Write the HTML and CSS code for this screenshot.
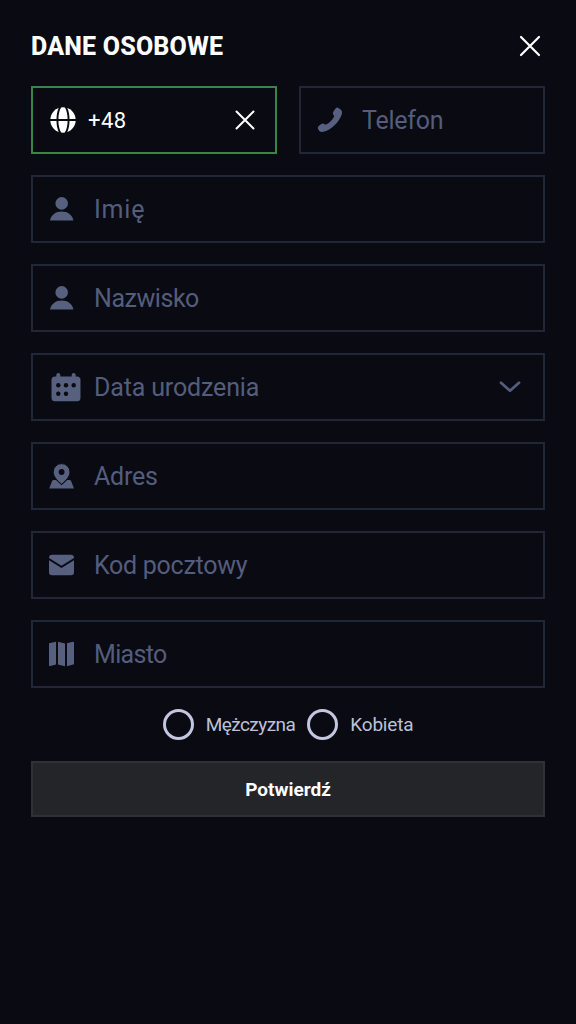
FILE: index.html
```html
<!DOCTYPE html>
<html lang="pl">
<head>
<meta charset="utf-8">
<title>Dane osobowe</title>
<link rel="stylesheet" href="styles.css">
</head>
<body>
<main class="form">
  <header class="header">
    <h1 class="title">DANE OSOBOWE</h1>
    <svg class="close" viewBox="0 0 22 22"><path d="M2 2L20 20M20 2L2 20"/></svg>
  </header>
  <div class="fields">
    <div class="phone-row">
      <div class="field field-active">
        <svg class="icon globe" viewBox="0 0 26 26"><circle cx="13" cy="13" r="12.7"/><path class="cut" d="M0 13H26M10.800-1C6.300 6 6.300 20 10.800 27M15.200-1C19.700 6 19.700 20 15.200 27"/></svg>
        <span class="value">+48</span>
        <svg class="clear" viewBox="0 0 20 20"><path d="M1.500 1.500L18.500 18.500M18.500 1.500L1.500 18.500"/></svg>
      </div>
      <div class="field">
        <svg class="icon" viewBox="0 0 26 26"><path d="M18.700 1.200Q20 .2 21.500.9L24 2.700Q25.300 4 25 6.500C23 14.500 14 23.300 6.200 24.800Q3.500 25.200 2.300 24L.9 21.700Q.4 20 1.700 18.900L4.300 17Q5.500 16.200 6.800 16.800L8.700 17.700C12.300 16 15.700 12.700 17.300 9.200L16.200 7.400Q15.500 6 16.300 4.700Z"/></svg>
        <span class="label telefon">Telefon</span>
      </div>
    </div>
    <div class="field">
      <svg class="icon" viewBox="0 0 26 26"><circle cx="12.700" cy="7.400" r="6.300"/><path d="M1 24.500C2 19 6.700 15.600 12.700 15.600S23.400 19 24.400 24.500Z"/></svg>
      <span class="label imie">Imię</span>
    </div>
    <div class="field">
      <svg class="icon" viewBox="0 0 26 26"><circle cx="12.700" cy="7.400" r="6.300"/><path d="M1 24.500C2 19 6.700 15.600 12.700 15.600S23.400 19 24.400 24.500Z"/></svg>
      <span class="label nazwisko">Nazwisko</span>
    </div>
    <div class="field">
      <svg class="icon calendar" viewBox="0 0 30 30"><rect x="5.300" y="1" width="4" height="9" rx="2"/><rect x="20.700" y="1" width="4" height="9" rx="2"/><rect x=".5" y="4.600" width="29" height="24.700" rx="3.500"/><g class="cutout"><circle cx="7.300" cy="13.200" r="2.200"/><circle cx="15" cy="13.200" r="2.200"/><circle cx="22.700" cy="13.200" r="2.200"/><circle cx="7.300" cy="21.800" r="2.200"/><circle cx="15" cy="21.800" r="2.200"/></g></svg>
      <span class="label data">Data urodzenia</span>
      <svg class="chevron" viewBox="0 0 24 14"><path d="M3 2.800L12 10.800L21 2.800"/></svg>
    </div>
    <div class="field">
      <svg class="icon" viewBox="0 0 26 26"><path d="M.2 25.400L3 18.200Q3.500 17 4.700 17H7L12.600 22.300L18.200 17H20.500Q21.700 17 22.200 18.200L25 25.400Z"/><path class="pin" d="M12.600 21.200C8.300 17.800 4.200 13.700 4.200 9A8.400 8.400 0 0 1 21 9C21 13.700 16.900 17.800 12.600 21.200Z"/><circle class="cutout" cx="12.600" cy="9" r="2.900"/></svg>
      <span class="label adres">Adres</span>
    </div>
    <div class="field">
      <svg class="icon" viewBox="0 0 26 26"><path d="M3 2.700H22Q25 2.700 25 6L12.500 13.700L0 6Q0 2.700 3 2.700ZM0 8.300L12.500 15.900L25 8.300V20.200Q25 23.200 22 23.200H3Q0 23.200 0 20.200Z"/></svg>
      <span class="label kod">Kod pocztowy</span>
    </div>
    <div class="field">
      <svg class="icon" viewBox="0 0 26 26"><path d="M0 2.200L7 .8V23.500L1.300 25.100Q0 25.300 0 24ZM9 .8L16 2.400V25.200L9 23.500ZM18 2.300L23.900.7Q25 .5 25 2V23.200L18 25.200Z"/></svg>
      <span class="label miasto">Miasto</span>
    </div>
  </div>
  <div class="gender">
    <label class="option"><span class="radio"></span><span class="man">Mężczyzna</span></label>
    <label class="option"><span class="radio"></span><span class="woman">Kobieta</span></label>
  </div>
  <button class="submit">Potwierdź</button>
</main>
</body>
</html>
```
FILE: styles.css
```css
* { box-sizing: border-box; }
body { margin: 0; background: #090a12; font-family: Roboto, "Noto Sans", sans-serif; color: #fff; }
svg { display: block; flex: none; }
.form { padding: 31px 31px 0; }
.header { display: flex; justify-content: space-between; height: 55px; padding: 0 4px 0 0; }
.title { margin: 0; font-size: 25px; line-height: 32px; font-weight: 800; letter-spacing: .2px; white-space: nowrap; }
.close { width: 22px; height: 22px; margin-top: 4px; fill: none; stroke: #fff; stroke-width: 2.200; stroke-linecap: round; }
.fields { display: grid; gap: 21px; }
.phone-row { display: grid; grid-template-columns: 1fr 1fr; gap: 22px; }
.field { display: flex; align-items: center; height: 68px; border: 2px solid #222737; padding: 0 21px 0 16px; }
.field-active { border-color: #388548; }
.icon { width: 26px; height: 26px; fill: #57607f; margin-right: 19px; }
.globe { fill: #fff; margin-left: 1px; margin-right: 12px; }
.cut { fill: none; stroke: #090a12; stroke-width: 1.900; }
.cutout { fill: #090a12; }
.pin { stroke: #090a12; stroke-width: 1; }
.calendar { width: 30px; height: 30px; margin-left: 2px; margin-right: 13px; }
.label { color: #545d7d; font-size: 25px; line-height: 34px; padding-top: 2px; white-space: nowrap; }
.telefon { letter-spacing: -.25px; }
.imie { letter-spacing: .8px; }
.nazwisko { letter-spacing: -.45px; }
.data { letter-spacing: -.15px; }
.adres { letter-spacing: -.2px; }
.kod { letter-spacing: -.27px; }
.miasto { letter-spacing: -.65px; }
.value { font-size: 22px; line-height: 30px; letter-spacing: .5px; padding-top: 1px; }
.clear { width: 20px; height: 20px; margin-left: auto; margin-right: -1px; fill: none; stroke: #fff; stroke-width: 2; stroke-linecap: round; }
.chevron { width: 24px; height: 14px; margin-left: auto; fill: none; stroke: #545d7d; stroke-width: 2.800; stroke-linecap: round; stroke-linejoin: round; }
.gender { display: flex; justify-content: center; gap: 12px; height: 73px; padding-top: 21px; }
.option { display: flex; align-items: center; gap: 12px; height: 31px; color: #bcc1db; font-size: 19px; white-space: nowrap; }
.man { letter-spacing: -.55px; }
.woman { letter-spacing: -.2px; }
.radio { width: 31px; height: 31px; border: 3px solid #c3c6df; border-radius: 50%; }
.submit { display: block; width: 100%; height: 56px; padding: 0; border: 2px solid #2f3138; background: #242529; color: #fff; font: 700 19px Roboto, "Noto Sans", sans-serif; }
```
